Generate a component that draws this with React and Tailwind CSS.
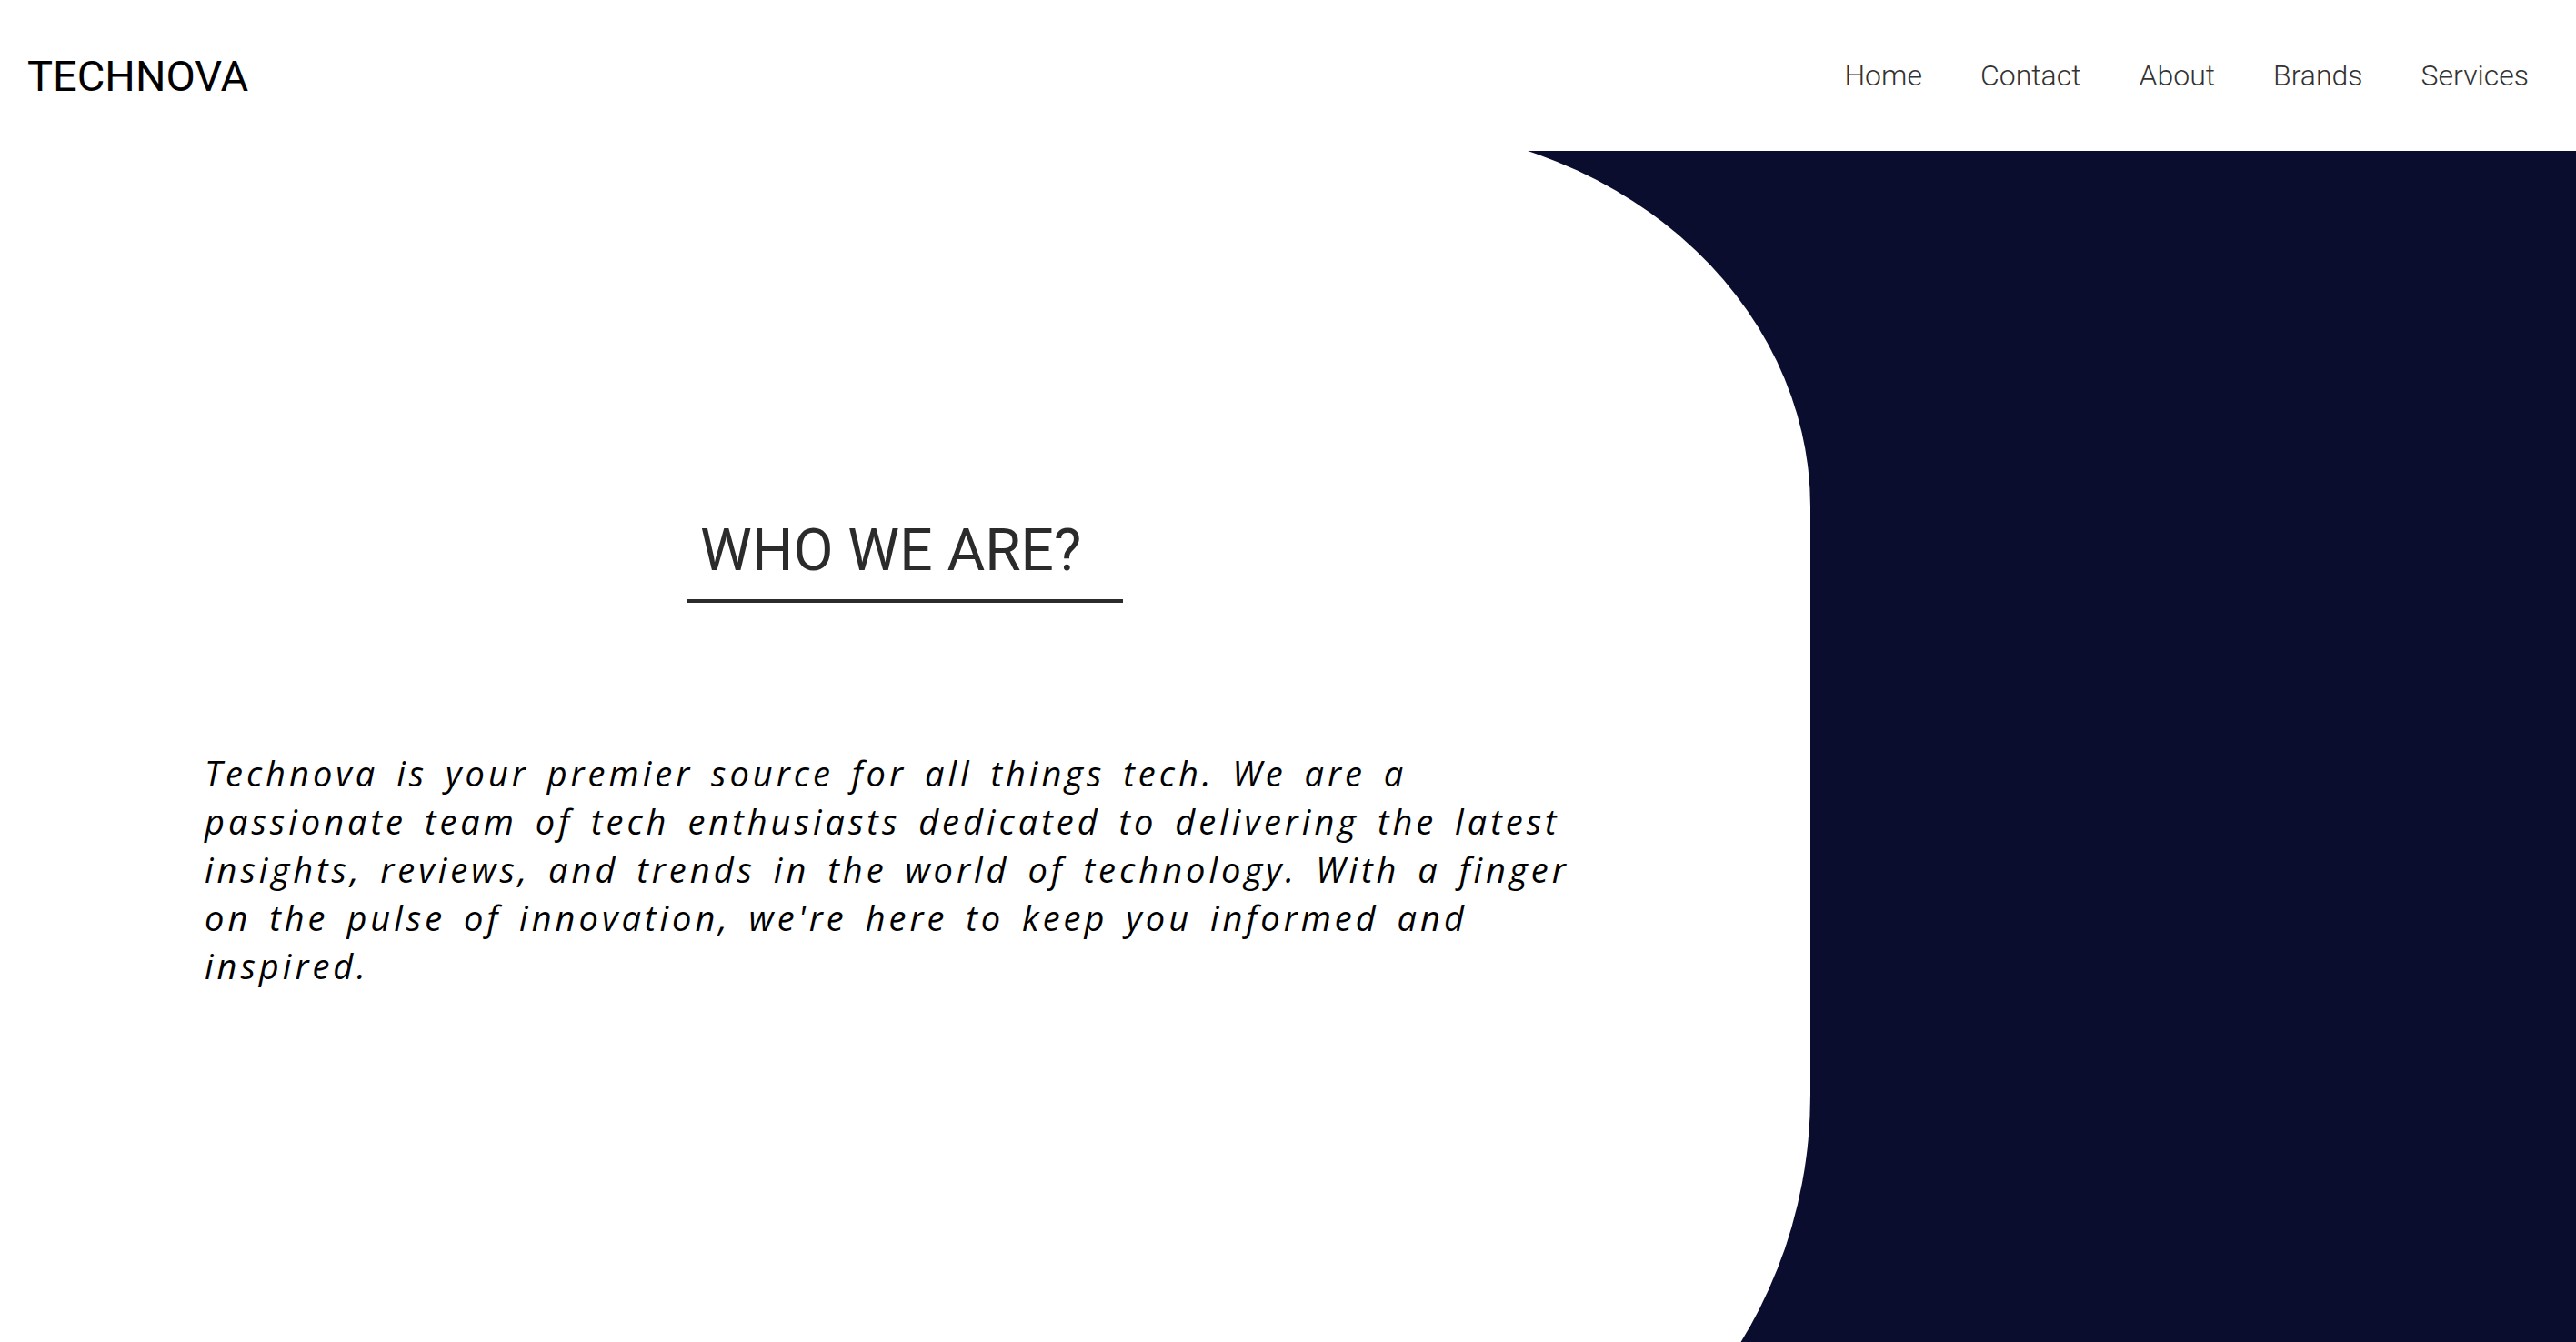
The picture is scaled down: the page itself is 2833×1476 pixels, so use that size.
import React from "react";

const links = ["Home", "Contact", "About", "Brands", "Services"];

const Header = () => {
  return (
    <header className="h-[166px] shrink-0 bg-white flex items-center justify-between pl-[30px] pr-[52px] font-['Roboto',sans-serif]">
      <a href="#" className="text-[47px] leading-none text-black">
        TECHNOVA
      </a>
      <nav className="flex items-center gap-[64px]">
        {links.map((link) => (
          <a key={link} href="#" className="text-[32px] leading-none font-light text-[#333333]">
            {link}
          </a>
        ))}
      </nav>
    </header>
  );
};

const About = () => {
  return (
    <section className="-mt-[28px] w-[1991px] h-[1566px] bg-white rounded-tr-[485px_420px] rounded-br-[475px_500px] pt-[436px] flex flex-col">
      <h1 className="self-center w-[479px] pl-[14px] pb-[21px] border-b-4 border-[#2b2b2b] text-[64px] leading-none font-normal text-[#2b2b2b] font-['Roboto',sans-serif]">
        WHO WE ARE?
      </h1>
      <p className="mt-[161px] ml-[225px] w-[1540px] text-[38px] leading-[53px] italic tracking-[4px] [word-spacing:6px] text-black font-['Open_Sans',sans-serif]">
        Technova is your premier source for all things tech. We are a passionate team of tech
        enthusiasts dedicated to delivering the latest insights, reviews, and trends in the world
        of technology. With a finger on the pulse of innovation, we're here to keep you informed
        and inspired.
      </p>
    </section>
  );
};

export default function App() {
  return (
    <div className="h-[1476px] flex flex-col overflow-hidden bg-white">
      <Header />
      <main className="flex-1 bg-[#0b0d2f] overflow-hidden">
        <About />
      </main>
    </div>
  );
}
